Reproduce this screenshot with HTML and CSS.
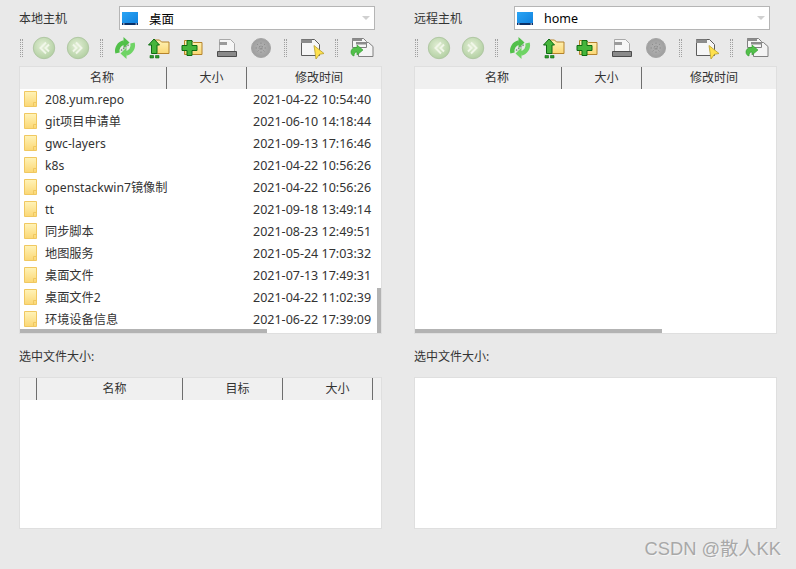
FILE: index.html
```html
<!DOCTYPE html>
<html>
  <head>
    <title>文件传输</title>
    <link rel="stylesheet" href="styles.css">
  </head>

  <body>
    <svg class="sprite" width="0" height="0">
      <defs>
        <radialGradient id="greenBall" cx="45%" cy="40%" r="60%">
          <stop offset="0" stop-color="#e3efd6" />
          <stop offset="1" stop-color="#b3d0a3" />
        </radialGradient>
        <radialGradient id="greyBall" cx="50%" cy="50%" r="55%">
          <stop offset="0" stop-color="#b5b5b5" />
          <stop offset="1" stop-color="#9c9c9c" />
        </radialGradient>
        <linearGradient id="folderFill" x1="0" y1="0" x2="0" y2="1">
          <stop offset="0" stop-color="#fff3b8" />
          <stop offset="1" stop-color="#fbd774" />
        </linearGradient>
        <linearGradient id="screenFill" x1="0" y1="0" x2="1" y2="1">
          <stop offset="0" stop-color="#2aa5f5" />
          <stop offset="1" stop-color="#0f7fdc" />
        </linearGradient>
        <symbol id="i-back" viewBox="0 0 24 24">
          <circle cx="12" cy="12" r="10.7" fill="url(#greenBall)" stroke="#b0c7a3" />
          <path d="M14 6.500 8.500 12l5.500 5.500M17 8.500 13.500 12l3.500 3.500" fill="none" stroke="#f0f6e8" stroke-width="2" />
        </symbol>
        <symbol id="i-forward" viewBox="0 0 24 24">
          <circle cx="12" cy="12" r="10.7" fill="url(#greenBall)" stroke="#b0c7a3" />
          <path d="M10 6.500 15.500 12 10 17.500M7 8.500l3.500 3.500L7 15.500" fill="none" stroke="#f0f6e8" stroke-width="2" />
        </symbol>
        <symbol id="i-refresh" viewBox="0 0 24 24">
          <path d="M4.500 17A8.500 8.500 0 0 1 11 6.500" fill="none" stroke="#52c04a" stroke-width="4.500" />
          <path d="M10.500 1l6 5.500-6 6z" fill="#52c04a" />
          <path d="M19.500 7A8.500 8.500 0 0 1 13 17.500" fill="none" stroke="#6fd465" stroke-width="4.500" />
          <path d="M13.500 11.500l-6 6 6 5.500z" fill="#6fd465" />
          <path d="M8 14.500l8-6" stroke="#77907a" stroke-width="1.500" stroke-dasharray="1.500 1.200" />
        </symbol>
        <symbol id="i-folder-up" viewBox="0 0 22 22">
          <path d="M5.500 3h6l2 2h7.500v11.500h-15.500z" fill="url(#folderFill)" stroke="#b5832b" />
          <path d="M6 2l5.500 6H9v8.500H3.500V8H.500z" fill="#47b53c" stroke="#0d6b12" />
          <path d="M2 18.500h3.500V21H2zM7.500 18.500H11V21H7.500z" fill="#2f9a2b" stroke="#0d6b12" stroke-width=".6" />
        </symbol>
        <symbol id="i-folder-new" viewBox="0 0 22 22">
          <path d="M3.500 3.500h7l2 2h8.500v12H3.500z" fill="url(#folderFill)" stroke="#b5832b" />
          <path d="M6 3.500h5v5h5v5h-5v5H6v-5H1v-5h5z" fill="#45b53b" stroke="#0d6b12" />
        </symbol>
        <symbol id="i-printer" viewBox="0 0 22 22">
          <path d="M3.500 2.500h11l4 4v8h-15z" fill="#f6f6f6" stroke="#a9a9a9" />
          <path d="M3 5h8v3H3z" fill="#9b9b9b" />
          <path d="M1.500 14.500h19v5h-19z" fill="#8a8a8a" stroke="#4c4c4c" />
        </symbol>
        <symbol id="i-stop" viewBox="0 0 20 20">
          <circle cx="10" cy="10" r="9.500" fill="url(#greyBall)" stroke="#a5a5a5" />
          <path d="M6 6l8 8M14 6l-8 8M10 4.500v11M4.500 10h11" stroke="#8d8d8d" stroke-dasharray="1.500 1.500" />
        </symbol>
        <symbol id="i-doc-run" viewBox="0 0 25 22">
          <path d="M1.500 2.500h13l5 5v11h-18z" fill="#f6f6f6" stroke="#5c5c5c" />
          <path d="M1 2.500h11v3.500H1z" fill="#8c8c8c" />
          <path d="M14 8.500l10 8-4.500.8-3.500 4.700z" fill="#ffe14d" stroke="#b7a02c" stroke-width=".8" />
        </symbol>
        <symbol id="i-doc-move" viewBox="0 0 24 22">
          <path d="M8.500 5.500h10l4.500 4v10h-14.500z" fill="#f4f4f4" stroke="#808080" />
          <path d="M2.500 1.500h11l3 3v6h-14z" fill="#f6f6f6" stroke="#808080" />
          <path d="M2 1.500h10v2.500H2zM6 5h11v2.500H6z" fill="#8c8c8c" />
          <path d="M1 15c0-3 3-5 6-4.500V8l6 5-6 5v-3c-2 0-3 1-3 4-2-.5-3-2-3-4z" fill="#52c04a" stroke="#2f9a2b" stroke-width=".6" />
        </symbol>
        <symbol id="i-screen" viewBox="0 0 16 13">
          <path d="M0 0h16v13H0z" fill="url(#screenFill)" />
          <path d="M0 11h16v2H0z" fill="#0a2f66" />
          <path d="M1 11.500h1.500v1H1zM13.500 11.500H15v1h-1.500z" fill="#fff" />
        </symbol>
        <symbol id="i-folder" viewBox="0 0 13 16">
          <path d="M.5.500h12v15H.5z" fill="url(#folderFill)" stroke="#f0c861" />
          <path d="M9.500 15.500v-4h3" fill="none" stroke="#f0c861" />
        </symbol>
      </defs>
    </svg>

    <div class="window">
      <section class="panel">
        <div class="host-row">
          <label class="host-label">本地主机</label>
          <div class="combo">
            <svg class="combo-icon"><use href="#i-screen" /></svg>
            <span class="combo-text">桌面</span>
            <span class="combo-arrow"></span>
          </div>
        </div>
        <div class="toolbar">
          <span class="grip"></span>
          <svg class="tool ball back"><use href="#i-back" /></svg>
          <svg class="tool ball forward"><use href="#i-forward" /></svg>
          <span class="grip second"></span>
          <svg class="tool refresh"><use href="#i-refresh" /></svg>
          <svg class="tool folder-up"><use href="#i-folder-up" /></svg>
          <svg class="tool folder-new"><use href="#i-folder-new" /></svg>
          <svg class="tool printer"><use href="#i-printer" /></svg>
          <svg class="tool stop"><use href="#i-stop" /></svg>
          <span class="grip third"></span>
          <svg class="tool doc-run"><use href="#i-doc-run" /></svg>
          <span class="grip fourth"></span>
          <svg class="tool doc-move"><use href="#i-doc-move" /></svg>
        </div>
        <div class="list files">
          <div class="list-head file-cols">
            <span>名称</span><span>大小</span><span>修改时间</span>
          </div>
          <div class="file-row"><svg class="folder"><use href="#i-folder" /></svg><span class="file-name">208.yum.repo</span><span class="file-date">2021-04-22 10:54:40</span></div>
          <div class="file-row"><svg class="folder"><use href="#i-folder" /></svg><span class="file-name">git项目申请单</span><span class="file-date">2021-06-10 14:18:44</span></div>
          <div class="file-row"><svg class="folder"><use href="#i-folder" /></svg><span class="file-name">gwc-layers</span><span class="file-date">2021-09-13 17:16:46</span></div>
          <div class="file-row"><svg class="folder"><use href="#i-folder" /></svg><span class="file-name">k8s</span><span class="file-date">2021-04-22 10:56:26</span></div>
          <div class="file-row"><svg class="folder"><use href="#i-folder" /></svg><span class="file-name">openstackwin7镜像制</span><span class="file-date">2021-04-22 10:56:26</span></div>
          <div class="file-row"><svg class="folder"><use href="#i-folder" /></svg><span class="file-name">tt</span><span class="file-date">2021-09-18 13:49:14</span></div>
          <div class="file-row"><svg class="folder"><use href="#i-folder" /></svg><span class="file-name">同步脚本</span><span class="file-date">2021-08-23 12:49:51</span></div>
          <div class="file-row"><svg class="folder"><use href="#i-folder" /></svg><span class="file-name">地图服务</span><span class="file-date">2021-05-24 17:03:32</span></div>
          <div class="file-row"><svg class="folder"><use href="#i-folder" /></svg><span class="file-name">桌面文件</span><span class="file-date">2021-07-13 17:49:31</span></div>
          <div class="file-row"><svg class="folder"><use href="#i-folder" /></svg><span class="file-name">桌面文件2</span><span class="file-date">2021-04-22 11:02:39</span></div>
          <div class="file-row"><svg class="folder"><use href="#i-folder" /></svg><span class="file-name">环境设备信息</span><span class="file-date">2021-06-22 17:39:09</span></div>
          <span class="vscroll"></span>
          <span class="hscroll"></span>
        </div>
        <div class="size-label">选中文件大小:</div>
        <div class="list queue">
          <div class="list-head queue-cols">
            <span></span><span>名称</span><span>目标</span><span class="queue-size">大小</span><span></span>
          </div>
        </div>
      </section>

      <section class="panel">
        <div class="host-row">
          <label class="host-label">远程主机</label>
          <div class="combo">
            <svg class="combo-icon"><use href="#i-screen" /></svg>
            <span class="combo-text">home</span>
            <span class="combo-arrow"></span>
          </div>
        </div>
        <div class="toolbar">
          <span class="grip"></span>
          <svg class="tool ball back"><use href="#i-back" /></svg>
          <svg class="tool ball forward"><use href="#i-forward" /></svg>
          <span class="grip second"></span>
          <svg class="tool refresh"><use href="#i-refresh" /></svg>
          <svg class="tool folder-up"><use href="#i-folder-up" /></svg>
          <svg class="tool folder-new"><use href="#i-folder-new" /></svg>
          <svg class="tool printer"><use href="#i-printer" /></svg>
          <svg class="tool stop"><use href="#i-stop" /></svg>
          <span class="grip third"></span>
          <svg class="tool doc-run"><use href="#i-doc-run" /></svg>
          <span class="grip fourth"></span>
          <svg class="tool doc-move"><use href="#i-doc-move" /></svg>
        </div>
        <div class="list files">
          <div class="list-head file-cols">
            <span>名称</span><span>大小</span><span>修改时间</span>
          </div>
          <span class="hscroll remote"></span>
        </div>
        <div class="size-label">选中文件大小:</div>
        <div class="list queue"></div>
      </section>
    </div>

    <div class="watermark">CSDN @散人KK</div>
  </body>
</html>
```

FILE: styles.css
```css
html,
body {
  margin: 0;
  height: 100%;
}

body {
  background-color: #e9e9e9;
  color: #333333;
  font-family: "Noto Sans", "Noto Sans CJK SC", sans-serif;
  font-size: 12px;
  position: relative;
  overflow: hidden;
}

.sprite {
  display: block;
  height: 0;
  width: 0;
}

.window {
  display: grid;
  grid-template-columns: 363px 363px;
  column-gap: 32px;
  padding: 6px 19px 0 19px;
}

.host-row {
  display: flex;
  align-items: center;
  height: 24px;
}

.host-label {
  width: 100px;
}

.combo {
  display: flex;
  align-items: center;
  width: 256px;
  height: 24px;
  box-sizing: border-box;
  background-color: #ffffff;
  border: 1px solid #b5b5b5;
  color: #000000;
  padding-left: 2px;
}

.combo-icon {
  width: 16px;
  height: 13px;
}

.combo-text {
  margin-left: 11px;
  font-size: 12.5px;
}

.combo-arrow {
  margin-left: auto;
  margin-right: 4px;
  width: 0;
  height: 0;
  border-left: 4px solid transparent;
  border-right: 4px solid transparent;
  border-top: 4px solid #d0d0d0;
}

.toolbar {
  display: flex;
  align-items: center;
  height: 36px;
  box-sizing: border-box;
  padding-bottom: 1px;
}

.grip {
  flex: none;
  width: 1px;
  height: 18px;
  margin-left: 1px;
  border-left: 1px dotted #a0a0a0;
  border-right: 1px dotted #a0a0a0;
}

.grip.second {
  margin-left: 10px;
}

.grip.third {
  margin-left: 13px;
}

.grip.fourth {
  margin-left: 10px;
}

.tool {
  display: block;
  flex: none;
}

.ball {
  width: 24px;
  height: 24px;
}

.back {
  margin-left: 9px;
}

.forward {
  margin-left: 10px;
}

.refresh {
  width: 24px;
  height: 24px;
  margin-left: 10px;
}

.folder-up {
  width: 22px;
  height: 22px;
  margin-left: 11px;
}

.folder-new {
  width: 22px;
  height: 22px;
  margin-left: 11px;
}

.printer {
  width: 22px;
  height: 22px;
  margin-left: 13px;
}

.stop {
  width: 20px;
  height: 20px;
  margin-left: 13px;
}

.doc-run {
  width: 25px;
  height: 22px;
  margin-left: 13px;
}

.doc-move {
  width: 24px;
  height: 22px;
  margin-left: 12px;
}

.list {
  background-color: #ffffff;
  border: 1px solid #dfdfdf;
  box-sizing: border-box;
  position: relative;
  overflow: hidden;
}

.files {
  height: 268px;
}

.queue {
  height: 152px;
}

.list-head {
  display: grid;
  height: 22px;
  background-color: #f0f0f0;
  line-height: 22px;
  text-align: center;
}

.list-head span {
  border-right: 1px solid #6e6e6e;
  padding-left: 10px;
}

.list-head span:last-child {
  border-right: none;
}

.file-cols {
  grid-template-columns: 147px 80px 1fr;
}

.file-cols span:first-child {
  padding-left: 18px;
}

.queue-cols {
  grid-template-columns: 17px 146px 100px 90px 1fr;
}

.list-head .queue-size {
  padding-left: 20px;
}

.file-row {
  display: flex;
  align-items: center;
  height: 22px;
  box-sizing: border-box;
  padding-left: 4px;
  padding-bottom: 2px;
}

.folder {
  width: 13px;
  height: 16px;
  flex: none;
}

.file-name {
  margin-left: 8px;
  width: 208px;
  flex: none;
  font-size: 12.2px;
  white-space: nowrap;
}

.file-date {
  font-size: 12.5px;
  white-space: nowrap;
}

.vscroll {
  position: absolute;
  right: 0;
  bottom: 0;
  width: 4px;
  height: 45px;
  background-color: #b3b3b3;
}

.hscroll {
  position: absolute;
  left: 0;
  bottom: 0;
  width: 247px;
  height: 4px;
  background-color: #b3b3b3;
}

.size-label {
  height: 43px;
  line-height: 45px;
}

.watermark {
  position: absolute;
  right: 15px;
  bottom: 8px;
  color: #a8a8a8;
  font-family: "Liberation Sans", "Noto Sans CJK SC", sans-serif;
  font-size: 18.3px;
  line-height: 24px;
  text-shadow: 1px 1px 0 #f4f4f4;
}
```
